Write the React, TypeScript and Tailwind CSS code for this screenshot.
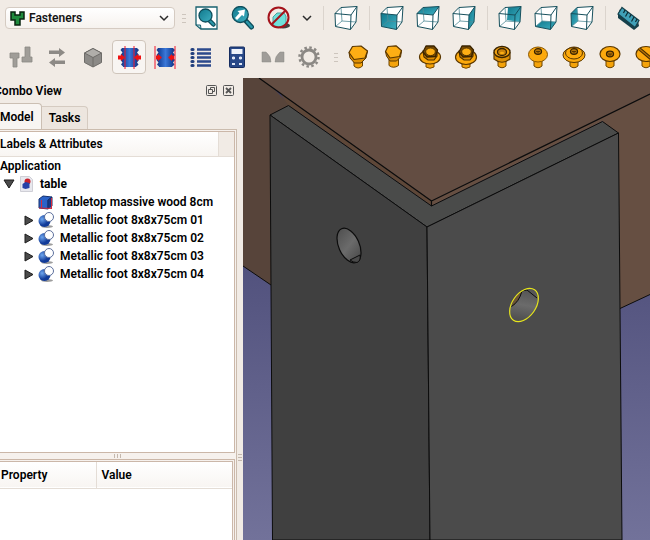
import React from "react";

type Kids = { children?: React.ReactNode };

function Icon({ children, size = 24 }: Kids & { size?: number }) {
  return (
    <svg width={size} height={size} viewBox="0 0 24 24" fill="none" aria-hidden="true">
      {children}
    </svg>
  );
}

function Tool({ label, children }: Kids & { label: string }) {
  return (
    <button type="button" aria-label={label} className="flex h-8 w-9 shrink-0 items-center justify-center">
      {children}
    </button>
  );
}

function Grip() {
  return (
    <div className="flex w-[13px] shrink-0 flex-col items-center gap-[3px] pl-1">
      <span className="h-px w-1 bg-[#cdc5bd]" />
      <span className="h-px w-1 bg-[#cdc5bd]" />
      <span className="h-px w-1 bg-[#cdc5bd]" />
    </div>
  );
}

function Separator() {
  return (
    <div className="flex h-6 w-[10px] shrink-0 justify-center">
      <span className="w-px bg-[#dbd4cd]" />
    </div>
  );
}

const FACES: Record<string, string> = {
  iso: "",
  front: "M1 7.500 17 9 16.500 23.500 1.500 20.500Z",
  top: "M1 7.500 7 1.500 23 .5 17 9Z",
  right: "M17 9 23 .5 22 16 16.500 23.500Z",
  rear: "M10 1.500 23 .5 22 16 9 14Z",
  bottom: "M1.500 20.500 8 15 22 16 16.500 23.500Z",
  left: "M1 7.500 7 1.500 8 15 1.500 20.500Z",
};

function ViewCube({ face }: { face: string }) {
  return (
    <Icon>
      <path d="M1 7.500 7 1.500 23 .5 22 16 16.500 23.500 1.500 20.500Z" fill="#fff" />
      {FACES[face] && <path d={FACES[face]} fill="url(#teal)" />}
      <path d="M7 1.500 8 15M1.500 20.500 8 15 22 16" stroke="#528c97" strokeWidth=".8" />
      <path
        d="M1 7.500 7 1.500 23 .5 22 16 16.500 23.500 1.500 20.500ZM1 7.500 17 9 16.500 23.500M17 9 23 .5"
        stroke="#17505d"
        strokeWidth="1"
        strokeLinejoin="round"
      />
    </Icon>
  );
}

function HexHead({ small }: { small?: boolean }) {
  return (
    <Icon>
      <path
        d={small ? "M7 13v7.500q4.500 3.500 9.500 0V13z" : "M8 16v5q4 4 8.500 0v-5z"}
        fill="#f5a30a"
        stroke="#6a4300"
      />
      <path
        d={small ? "M3.500 6.500 4.500 11 8 16h6.500l4-4 1-6z" : "M3 7.500 4 13l4.500 5H15l5-5 1.500-7z"}
        fill="#dd8f05"
        stroke="#5a3700"
      />
      <path
        d={small ? "M3.500 6.500 6 1.500 14 .8 19.500 5.500 17.500 11.500 8 13Z" : "M3 7.500 6.500 1.500 15 1 21.500 6 19 13 8 14.500Z"}
        fill="#fdae14"
        stroke="#5a3700"
        strokeWidth="1.200"
        strokeLinejoin="round"
      />
    </Icon>
  );
}

function FlangeHead({ heavy }: { heavy?: boolean }) {
  return (
    <Icon>
      <path d="M8 17v5q4 2.500 8 0v-5" fill="#f5a30a" stroke="#7a4a00" />
      <ellipse cx="12" cy="12" rx="10.500" ry={heavy ? 7.500 : 7} fill="#fca90d" stroke="#5a3700" strokeWidth="1.200" />
      <path d="M5 6 6 12l4 3h6l3-4V6z" fill="#d98a00" stroke="#4a2e00" strokeWidth="1.200" />
      <path d="M5 7 8 1h8l3.500 4-2 6.500-8.500.5Z" fill="#7a4b00" stroke="#3a2400" strokeWidth="1.300" strokeLinejoin="round" />
      <ellipse cx="12.500" cy="6.800" rx="4.800" ry="3.800" fill="#fdae14" stroke="#3a2400" strokeWidth=".8" />
    </Icon>
  );
}

function Socket({ y }: { y: number }) {
  return (
    <>
      <ellipse cx="12" cy={y} rx="3.500" ry="2.800" fill="#b87608" stroke="#3a2400" strokeWidth="1.300" />
      <path d={`M10 ${y}h4M12 ${y}v2`} stroke="#5a3700" />
    </>
  );
}

function RoundHead({ kind }: { kind: "cap" | "button" | "raised" | "flat" | "slot" }) {
  return (
    <Icon>
      <path d="M8 15v6q4 3.500 8 0v-6" fill="#f5a30a" stroke="#6a4300" />
      {kind === "cap" && (
        <>
          <path d="M4 7v7q8 6.500 16 0V7" fill="#dd8f05" stroke="#5a3700" strokeWidth="1.200" />
          <ellipse cx="12" cy="7" rx="8" ry="5.500" fill="#f0a012" stroke="#3a2400" strokeWidth="1.300" />
          <ellipse cx="12" cy="7" rx="4.500" ry="3.500" fill="#c9820b" stroke="#3a2400" strokeWidth="1.300" />
          <ellipse cx="12" cy="8" rx="2" ry="1.300" fill="#fdae14" />
        </>
      )}
      {kind === "button" && (
        <>
          <ellipse cx="12" cy="9.500" rx="9.500" ry="7.500" fill="#fca90d" stroke="#8a5600" />
          <Socket y={6.5} />
        </>
      )}
      {kind === "raised" && (
        <>
          <ellipse cx="12" cy="10" rx="11" ry="7.500" fill="#fca90d" stroke="#5a3700" />
          <ellipse cx="12" cy="8" rx="8.500" ry="6" stroke="#5a3700" />
          <Socket y={6.5} />
        </>
      )}
      {(kind === "flat" || kind === "slot") && (
        <ellipse cx="12" cy="9" rx="10" ry="7.500" fill="#fca90d" stroke="#5a3700" strokeWidth="1.200" />
      )}
      {kind === "flat" && <Socket y={9} />}
      {kind === "slot" && (
        <>
          <path d="m5 3.500 13 11" stroke="#4a2e00" strokeWidth="3.500" />
          <path d="m5 3.500 13 11" stroke="#b87608" strokeWidth="1.200" />
        </>
      )}
    </Icon>
  );
}

function ThreadIcon({ wide }: { wide?: boolean }) {
  return (
    <Icon>
      <path
        d="M5 3h15l2 2-2 2.500 2 2.500-2 2.500 2 2.500-2 2.500 1.500 2-2 2H6l-2-2 1.500-2-2-2.500 2-2.500-2-2.500 2-2.500-2-2.500z"
        fill="#1d3f8f"
      />
      <path d="M6 3h13v19H6z" fill="url(#blue)" />
      {wide ? (
        <>
          <path d="M2 1v23M22 1v23" stroke="#f0142d" />
          <path d="M3 10.500h2V9l4 3.500L5 16v-1.500H3zM21 10.500h-2V9l-4 3.500 4 3.500v-1.500h2z" fill="#ed1111" />
        </>
      ) : (
        <>
          <path d="M8 1v23M17 1v23" stroke="#f0142d" />
          <path d="M1 10.500h3V9l4 3.500L4 16v-1.500H1zM24 10.500h-3V9l-4 3.500 4 3.500v-1.500h3z" fill="#ed1111" />
        </>
      )}
    </Icon>
  );
}

function Toolbars() {
  return (
    <header className="overflow-hidden bg-[#f1ebe5]">
      <div className="flex h-9 items-center">
        <div className="relative ml-[5px] h-[22px] w-[170px] shrink-0">
          <select
            aria-label="Workbench"
            className="block h-full w-full appearance-none rounded-[4px] border border-[#d5cbc2] bg-gradient-to-b from-white to-[#f6f2ee] pl-[23px] text-[12px] leading-5 font-semibold text-[#151515]"
          >
            <option>Fasteners</option>
          </select>
          <svg className="pointer-events-none absolute top-1 left-[5px]" width="15" height="15" viewBox="0 0 15 15" aria-hidden="true">
            <path d="M1 1h4v3h5V1h4v7h-4v6H5V9H1z" fill="#1f8a3c" stroke="#08240f" strokeWidth="1.500" />
          </svg>
          <svg className="pointer-events-none absolute top-[7px] right-[6px]" width="10" height="8" viewBox="0 0 10 8" fill="none" aria-hidden="true">
            <path d="m1 2 4 4 4-4" stroke="#2b2b2b" strokeWidth="1.500" />
          </svg>
        </div>
        <Grip />
        <Tool label="Fit all">
          <Icon>
            <path d="M2 1h21v22H7l-5-4z" fill="#fff" stroke="#17616f" strokeWidth="1.300" />
            <path d="M2 19h4.500l.5 4z" fill="#b9dbe0" stroke="#17616f" />
            <path d="m15 14 4.500 4.500" stroke="#0e4e5c" strokeWidth="4.500" strokeLinecap="round" />
            <path d="m16 15 3.500 3.500" stroke="#2a97a9" strokeWidth="2" strokeLinecap="round" />
            <circle cx="11.500" cy="9.500" r="6.500" fill="url(#teal)" stroke="#0e4e5c" strokeWidth="1.300" />
          </Icon>
        </Tool>
        <Tool label="Fit selection">
          <Icon>
            <path d="m16 15 5.500 6" stroke="#0e4e5c" strokeWidth="5" strokeLinecap="round" />
            <path d="m17 16 4.500 5" stroke="#2a97a9" strokeWidth="2.500" strokeLinecap="round" />
            <circle cx="10.300" cy="8.500" r="8" fill="url(#teal)" stroke="#0e4e5c" strokeWidth="1.300" />
            <path d="m5 12 4.500-5-2-2 7.500-1.500-1 7-2-1.500-5 5z" fill="#fff" />
          </Icon>
        </Tool>
        <Tool label="Draw style">
          <Icon>
            <ellipse cx="17" cy="19.500" rx="7" ry="3" fill="#3f4040" />
            <path d="M7 11 11 7h7l2 3v9q-6 3-13 1z" fill="#6fe0da" stroke="#48a19e" />
            <circle cx="12.500" cy="11.500" r="10" stroke="#a5131b" strokeWidth="2" />
            <path d="m5.500 18.500 14-14" stroke="#a5131b" strokeWidth="2" />
          </Icon>
        </Tool>
        <button type="button" aria-label="Draw style options" className="flex h-8 w-[22px] shrink-0 items-center justify-center">
          <svg width="10" height="8" viewBox="0 0 10 8" fill="none" aria-hidden="true">
            <path d="m1 2 4 4 4-4" stroke="#2b2b2b" strokeWidth="1.500" />
          </svg>
        </button>
        <Separator />
        <Tool label="Isometric"><ViewCube face="iso" /></Tool>
        <Separator />
        <Tool label="Front"><ViewCube face="front" /></Tool>
        <Tool label="Top"><ViewCube face="top" /></Tool>
        <Tool label="Right"><ViewCube face="right" /></Tool>
        <Separator />
        <Tool label="Rear"><ViewCube face="rear" /></Tool>
        <Tool label="Bottom"><ViewCube face="bottom" /></Tool>
        <Tool label="Left"><ViewCube face="left" /></Tool>
        <Separator />
        <Tool label="Measure distance">
          <Icon>
            <path d="m2 8 2-5 18 12 1 5-5 4L2 12z" fill="#16404b" />
            <path d="m6 1.500 17 13-4 7L2 8z" fill="#3fa0b8" stroke="#16404b" strokeWidth="1.200" />
            <path d="m9 4-1.500 3M12 6l-2.500 4.500M15 8.500l-1.500 3M18 11l-2.500 4.500M21 13l-1.500 3" stroke="#0d2b33" strokeWidth="1.200" />
          </Icon>
        </Tool>
      </div>
      <div className="flex h-[42px] items-center pl-[3px]">
        <Tool label="Flip fastener">
          <Icon>
            <path d="M1 8h9v5H8v9H4v-9H1zM13 12h3V2h5v10h2v5H13z" fill="#a09d98" stroke="#8b8883" strokeWidth=".8" />
          </Icon>
        </Tool>
        <Tool label="Move fastener">
          <Icon>
            <path d="M4 5.500h10V3l6 4.500-6 4.500V9H4zM20 15.500H10V13l-6 4.500 6 4.500v-3h10z" fill="#8d8a86" />
          </Icon>
        </Tool>
        <Tool label="Simplify">
          <Icon>
            <path d="m12 3.500 8.500 4.500v9.500L12 22l-8.500-4.500V8z" fill="#8c8a87" stroke="#6e6c69" />
            <path d="m3.500 8 8.500 4.500L20.500 8 12 3.500z" fill="#b0aeaa" stroke="#6e6c69" />
            <path d="M12 12.500V22" stroke="#6e6c69" />
          </Icon>
        </Tool>
        <div className="flex w-9 shrink-0 justify-center">
          <button type="button" aria-pressed="true" aria-label="Match inner thread" className="flex h-[34px] w-[34px] items-center justify-center rounded-[4px] border border-[#cfc5bb] bg-[#f8f5f2]">
            <ThreadIcon />
          </button>
        </div>
        <Tool label="Match outer thread"><ThreadIcon wide /></Tool>
        <Tool label="Thread list">
          <Icon>
            <path d="M8 4.500h14M8 8.500h14M8 12.500h14M8 16.500h14M8 20.500h14" stroke="#2c4a8c" strokeWidth="2.400" />
            <path d="M3 4.500h1M3 8.500h1M3 12.500h1M3 16.500h1M3 20.500h1" stroke="#23407e" strokeWidth="3.200" strokeLinecap="round" />
          </Icon>
        </Tool>
        <Tool label="Hole calculator">
          <Icon>
            <rect x="4.500" y="2" width="15" height="20.500" rx="1" fill="#284888" stroke="#152c60" />
            <rect x="6.500" y="4" width="11" height="5" fill="#eef2fa" />
            <path d="M7 13h3M14 13h3M7 19h3M14 19h3M8.500 11.500v3M15.500 11.500v3" stroke="#dfe6f5" strokeWidth="1.800" />
          </Icon>
        </Tool>
        <Tool label="Countersink">
          <Icon>
            <path d="M1 7h4q5 4 5 10H1zM23 7h-4q-5 4-5 10h9z" fill="#a09d99" stroke="#8b8884" strokeWidth=".5" />
          </Icon>
        </Tool>
        <Tool label="Settings">
          <Icon>
            <circle cx="12" cy="12" r="9.500" stroke="#8b8884" strokeWidth="2.500" strokeDasharray="2.500 2.474" />
            <circle cx="12" cy="12" r="7" stroke="#8b8884" strokeWidth="2.800" />
          </Icon>
        </Tool>
        <Grip />
        <Tool label="Hex bolt"><HexHead /></Tool>
        <Tool label="Small hex bolt"><HexHead small /></Tool>
        <Tool label="Flange bolt"><FlangeHead /></Tool>
        <Tool label="Heavy flange bolt"><FlangeHead heavy /></Tool>
        <Tool label="Socket cap screw"><RoundHead kind="cap" /></Tool>
        <Tool label="Button screw"><RoundHead kind="button" /></Tool>
        <Tool label="Flanged button screw"><RoundHead kind="raised" /></Tool>
        <Tool label="Countersunk screw"><RoundHead kind="flat" /></Tool>
        <Tool label="Slotted screw"><RoundHead kind="slot" /></Tool>
      </div>
    </header>
  );
}

const FEET = ["01", "02", "03", "04"];

function Tree() {
  return (
    <ul role="tree" aria-label="Model" className="leading-[18px]">
      <li role="treeitem">
        Application
        <ul role="group">
          <li role="treeitem" aria-expanded="true">
            <div className="flex h-[18px] items-center pl-[3px] font-bold">
              <svg width="12" height="10" viewBox="0 0 12 10" aria-hidden="true">
                <path d="M1 1h10L6 9z" fill="#4b4b4b" stroke="#1d1d1d" />
              </svg>
              <svg className="mr-[7px] ml-[5px]" width="13" height="16" viewBox="0 0 13 16" aria-hidden="true">
                <path d="M.5.500h9l3 3v12H.5z" fill="#e8e8ee" stroke="#cfcfd6" />
                <circle cx="7.500" cy="5.500" r="3" fill="#c8202c" />
                <path d="m2.500 8 3-2 4 1v5l-4 1-3-1z" fill="#2540a8" />
              </svg>
              table
            </div>
            <ul role="group">
              <li role="treeitem" className="flex h-[18px] items-center pl-[38px]">
                <svg className="mr-1.5" width="16" height="15" viewBox="0 0 16 15" aria-hidden="true">
                  <path d="m1 4 4-3 9 1-4 3v9l-9-1z" fill="#2a62c8" stroke="#14306e" />
                  <path d="m10 5 4-3v9l-4 3z" fill="#17388a" stroke="#14306e" />
                  <path d="M3.500 13V5M1 13l13 .5M13.500 3v11" stroke="#d42b3e" />
                </svg>
                Tabletop massive wood 8cm
              </li>
              {FEET.map((n) => (
                <li key={n} role="treeitem" aria-expanded="false" className="flex h-[18px] items-center pl-6">
                  <svg width="10" height="11" viewBox="0 0 10 11" aria-hidden="true">
                    <path d="m1 1 8 4.500L1 10z" fill="#4b4b4b" stroke="#1d1d1d" />
                  </svg>
                  <svg className="mr-1.5 ml-1" width="16" height="16" viewBox="0 0 16 16" aria-hidden="true">
                    <ellipse cx="9" cy="14.500" rx="6" ry="1.500" fill="#9d9d9d" />
                    <circle cx="6.500" cy="9" r="6" fill="url(#ball)" />
                    <circle cx="11" cy="5" r="4.500" fill="#fff" stroke="#5c6f9c" />
                  </svg>
                  Metallic foot 8x8x75cm {n}
                </li>
              ))}
            </ul>
          </li>
        </ul>
      </li>
    </ul>
  );
}

function ComboView() {
  return (
    <aside className="flex w-[243px] shrink-0 bg-[#f1ebe5] text-[12px] font-semibold">
      <div className="flex min-w-0 flex-1 flex-col">
        <div className="flex h-[25px] items-center gap-[6px] pr-[3px]">
          <h2 className="-ml-[6px] flex-1">Combo View</h2>
          <button type="button" aria-label="Float panel">
            <svg width="11" height="11" viewBox="0 0 11 11" fill="none" stroke="#555" aria-hidden="true">
              <rect x=".5" y=".5" width="10" height="10" rx="1" />
              <path d="M4.500 4.500v-2h4v4h-2M2.500 4.500h4v4h-4z" />
            </svg>
          </button>
          <button type="button" aria-label="Close panel">
            <svg width="11" height="11" viewBox="0 0 11 11" fill="none" stroke="#555" aria-hidden="true">
              <rect x=".5" y=".5" width="10" height="10" rx="1" />
              <path d="m3 3 5 5M8 3 3 8" strokeWidth="1.800" />
            </svg>
          </button>
        </div>
        <div role="tablist" className="flex h-[26px] items-end">
          <button type="button" role="tab" aria-selected="true" className="h-[26px] w-[42px] rounded-tr-[4px] border-t border-r border-[#cbbfb3] bg-[#f8f5f2] text-left">
            Model
          </button>
          <button type="button" role="tab" aria-selected="false" className="h-[23px] w-[46px] rounded-tr-[4px] border-t border-r border-[#d5cbc1] bg-[#ede6df]">
            Tasks
          </button>
        </div>
        <div className="flex flex-1 flex-col border-t border-r border-[#cbbcae] bg-[#f6f1ed] pt-px pr-px">
          <section className="flex h-[322px] flex-col border-y border-r border-[#cbb7a8] bg-white">
            <div className="flex h-[25px] border-b border-[#e4ddd6] bg-gradient-to-b from-white to-[#f8f5f2]">
              <h3 className="flex flex-1 items-center border-r border-[#e4ddd6]">Labels &amp; Attributes</h3>
              <span className="w-[15px] bg-[#f1ebe5]" />
            </div>
            <Tree />
          </section>
          <div className="flex h-[6px] items-center justify-center gap-[2px]">
            <span className="h-1 w-px bg-[#c4b8ad]" />
            <span className="h-1 w-px bg-[#c4b8ad]" />
            <span className="h-1 w-px bg-[#c4b8ad]" />
          </div>
          <section className="flex-1 border-t border-r border-[#cbb7a8] pt-px pr-px">
            <div className="h-full border-t border-r border-[#cbb7a8] bg-white">
              <table className="w-full table-fixed border-collapse text-left">
                <thead className="h-[26px] border-b border-[#e4ddd6] bg-gradient-to-b from-white to-[#f8f5f2]">
                  <tr>
                    <th className="w-24 border-r border-[#e4ddd6] p-0 pl-px font-semibold">Property</th>
                    <th className="p-0 pl-[5px] font-semibold">Value</th>
                  </tr>
                </thead>
              </table>
            </div>
          </section>
        </div>
      </div>
      <div className="flex w-[6px] flex-col items-center gap-[2px] pt-[376px]">
        <span className="h-px w-1 bg-[#c4b8ad]" />
        <span className="h-px w-1 bg-[#c4b8ad]" />
        <span className="h-px w-1 bg-[#c4b8ad]" />
      </div>
    </aside>
  );
}

function Viewport() {
  return (
    <main className="relative min-w-0 flex-1 overflow-hidden bg-[#4f4f7c]">
      <svg className="absolute inset-0 h-full w-full" viewBox="243 78 407 462" preserveAspectRatio="xMinYMin slice" role="img" aria-label="3D view of the table">
        <rect x="243" y="78" width="407" height="462" fill="url(#sky)" />
        <path d="M243 78h20l30 30-22 177-28-19z" fill="#57443a" />
        <path d="M243 266 271 285" stroke="#0c0c0c" />
        <path d="M431.500 201 650 94V294.500L620 308.500 603 121 431.500 206z" fill="#664f42" />
        <path d="m620 308.500 30-14" stroke="#0c0c0c" />
        <path d="M259 78H650V94L431.500 201z" fill="#634d42" />
        <path d="M280 93 431.500 201v5L288 105z" fill="#5e4738" />
        <g stroke="#0c0c0c" strokeLinejoin="round">
          <path d="m270 115 18.500-9.500L431.500 206l171-84.500 16 11.500L427 227z" fill="#4a4b4a" />
          <path d="m270 115 157 112 3 313H272.500z" fill="#404040" />
          <path d="M427 227 618.500 133l3.500 407H430z" fill="#4b4b4b" />
          <path d="M259 78 431.500 201 650 94M431.500 201v5" fill="none" strokeWidth="1.200" />
        </g>
        <ellipse cx="349" cy="245.500" rx="10.300" ry="18.300" transform="rotate(-24 349 245.500)" fill="url(#hole)" stroke="#0c0c0c" strokeWidth="1.200" />
        <path d="m350 260 10-5q1 6-3 7.500-4 0-7-2.500z" fill="#4a4a4a" stroke="#0c0c0c" />
        <ellipse cx="524" cy="305" rx="11.800" ry="18.500" transform="rotate(35 524 305)" fill="url(#hole)" />
        <path d="M511.500 306.500Q519 302 522 291l-5 4q-5 5-5.500 11.500z" fill="#6b5436" />
        <path d="M511.500 306.500Q519 302 522 291l5-1 10 8" fill="none" stroke="#0c0c0c" />
        <ellipse cx="524" cy="305" rx="11.800" ry="18.500" transform="rotate(35 524 305)" fill="none" stroke="#e6e51c" strokeWidth="1.200" />
      </svg>
    </main>
  );
}

export default function App() {
  return (
    <div className="flex h-screen flex-col overflow-hidden bg-[#f1ebe5] font-['Roboto','Open_Sans',sans-serif] text-black">
      <svg className="absolute h-0 w-0" aria-hidden="true">
        <defs>
          <linearGradient id="teal" x2="1" y2="1">
            <stop stopColor="#10788c" />
            <stop offset="1" stopColor="#3fb0c2" />
          </linearGradient>
          <linearGradient id="blue">
            <stop stopColor="#17469f" />
            <stop offset=".5" stopColor="#3b78d8" />
            <stop offset="1" stopColor="#17469f" />
          </linearGradient>
          <radialGradient id="ball" cx=".3" cy=".35">
            <stop stopColor="#6ea6ee" />
            <stop offset="1" stopColor="#123b99" />
          </radialGradient>
          <linearGradient id="hole" x2=".3" y2="1">
            <stop stopColor="#4c4c4c" />
            <stop offset=".6" stopColor="#6b6b6b" />
            <stop offset="1" stopColor="#505050" />
          </linearGradient>
          <linearGradient id="sky" x2="0" y2="1">
            <stop stopColor="#3c3c6a" />
            <stop offset="1" stopColor="#72729a" />
          </linearGradient>
        </defs>
      </svg>
      <Toolbars />
      <div className="flex min-h-0 flex-1">
        <ComboView />
        <Viewport />
      </div>
    </div>
  );
}
